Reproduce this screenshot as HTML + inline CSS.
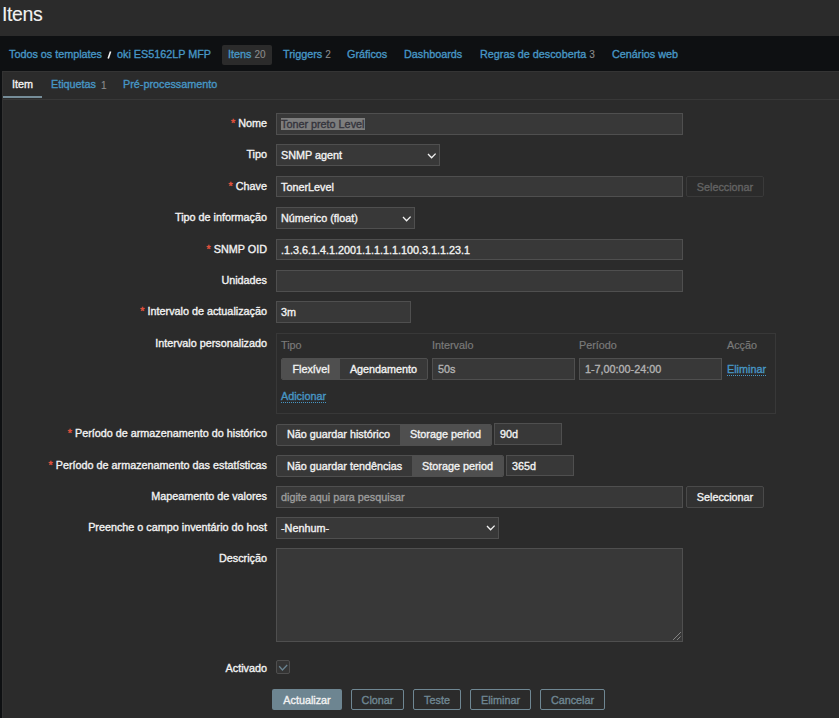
<!DOCTYPE html>
<html><head><meta charset="utf-8">
<style>
*{box-sizing:border-box;margin:0;padding:0}
html,body{width:839px;height:718px;overflow:hidden;background:#0e1012;font-family:"Liberation Sans",sans-serif;font-size:10.8px;color:#f2f2f2}
body div,body span{-webkit-text-stroke:0.35px currentColor}
.a{position:absolute}
.hdr{left:0;top:0;width:839px;height:36px;background:#2b2b2b}
.h1{left:2px;top:3px;font-size:19.5px;letter-spacing:-0.4px;line-height:22px;color:#f2f2f2;white-space:nowrap;-webkit-text-stroke:0.1px currentColor!important}
.nav{left:0;top:36px;width:839px;height:35px;background:#0e1012}
.lnk{color:#4796c4;white-space:nowrap}
.cnt{color:#8c8c8c;font-size:10px;-webkit-text-stroke:0.1px currentColor!important}
.t{white-space:nowrap;line-height:13px}
.cont{left:2px;top:71px;width:900px;height:700px;background:#2b2b2b;border-top:1px solid #343434;border-left:1px solid #323232}
.tabline{left:3px;top:99px;width:900px;height:1px;background:#383838}
.uline{left:3px;top:96px;width:39px;height:2px;background:#768d99}
.lbl{right:572px;height:22px;line-height:20px;white-space:nowrap;text-align:right;color:#f2f2f2}
.req{color:#e5533e;margin-right:3px}
.inp{height:22px;background:#383838;border:1px solid #4f4f4f;line-height:20px;padding-left:4px;white-space:nowrap;overflow:hidden;color:#f2f2f2}
.sel svg{position:absolute;right:2px;top:7px}
.btnd{height:22px;border:1px solid #3a3a3a;border-radius:2px;color:#636363;text-align:center;line-height:20px;white-space:nowrap}
.btna{height:21px;border:1px solid #6f8793;border-radius:2px;color:#6f8793;text-align:center;line-height:20px;white-space:nowrap}
.btnp{height:21px;background:#6d8591;border-radius:2px;color:#f2f2f2;text-align:center;line-height:21px;padding-top:1px;white-space:nowrap}
.btn2{height:22px;border:1px solid #4a4a4a;border-radius:2px;color:#f2f2f2;background:#323232;text-align:center;line-height:20px;white-space:nowrap}
.rad{height:22px;border:1px solid #4f4f4f;border-radius:2px;background:#383838;white-space:nowrap;overflow:hidden;display:flex}
.rad span{display:block;height:20px;line-height:20px;text-align:center;color:#f2f2f2}
.rad .on{background:#4f4f4f}
.r1 span{line-height:18px}
.gray{color:#7a7a7a;-webkit-text-stroke:0.2px currentColor!important}
</style></head><body>
<div class="a hdr"></div>
<div class="a h1">Itens</div>
<div class="a nav"></div>
<!-- nav items -->
<div class="a t lnk" style="left:9px;top:48px">Todos os templates</div>
<svg class="a" style="left:105px;top:49px" width="8" height="12" viewBox="0 0 8 12"><path d="M3.2 9.6 L5.6 2.4" stroke="#f2f2f2" stroke-width="1.6" fill="none"/></svg>
<div class="a t lnk" style="left:117px;top:48px">oki ES5162LP MFP</div>
<div class="a" style="left:222px;top:45px;width:50px;height:20px;background:#2b2b2b;border-radius:2px"></div>
<div class="a t lnk" style="left:228px;top:48px">Itens <span class="cnt">20</span></div>
<div class="a t lnk" style="left:283px;top:48px">Triggers <span class="cnt">2</span></div>
<div class="a t lnk" style="left:347px;top:48px">Gráficos</div>
<div class="a t lnk" style="left:404px;top:48px">Dashboards</div>
<div class="a t lnk" style="left:480px;top:48px">Regras de descoberta <span class="cnt">3</span></div>
<div class="a t lnk" style="left:612px;top:48px">Cenários web</div>

<div class="a cont"></div>
<div class="a tabline"></div>
<div class="a uline"></div>
<div class="a t" style="left:12px;top:78px;color:#f2f2f2">Item</div>
<div class="a t lnk" style="left:51px;top:78px">Etiquetas <span class="cnt" style="position:relative;left:2px;top:1px">1</span></div>
<div class="a t lnk" style="left:123px;top:78px">Pré-processamento</div>

<!-- form -->
<div class="a lbl" style="top:113px"><span class="req">*</span>Nome</div>
<div class="a inp" style="left:276px;top:113px;width:407px"><span style="background:#7d7d7d;color:#34343c;padding-right:1px">Toner preto Level</span></div>

<div class="a lbl" style="top:144px">Tipo</div>
<div class="a inp sel" style="left:276px;top:144px;width:164px">SNMP agent<svg width="12" height="8" viewBox="0 0 12 8"><path d="M3 2 L6.6 5.8 L10.6 1.6" fill="none" stroke="#f2f2f2" stroke-width="1.3"/></svg></div>

<div class="a lbl" style="top:176px"><span class="req">*</span>Chave</div>
<div class="a inp" style="left:276px;top:176px;width:407px;height:21px">TonerLevel</div>
<div class="a btnd" style="left:686px;top:176px;width:78px;height:21px">Seleccionar</div>

<div class="a lbl" style="top:207px">Tipo de informação</div>
<div class="a inp sel" style="left:276px;top:207px;width:139px">Númerico (float)<svg width="12" height="8" viewBox="0 0 12 8"><path d="M3 2 L6.6 5.8 L10.6 1.6" fill="none" stroke="#f2f2f2" stroke-width="1.3"/></svg></div>

<div class="a lbl" style="top:239px"><span class="req">*</span>SNMP OID</div>
<div class="a inp" style="left:276px;top:239px;width:407px;height:21px">.1.3.6.1.4.1.2001.1.1.1.1.100.3.1.1.23.1</div>

<div class="a lbl" style="top:270px">Unidades</div>
<div class="a inp" style="left:276px;top:270px;width:407px"></div>

<div class="a lbl" style="top:301px"><span class="req">*</span>Intervalo de actualização</div>
<div class="a inp" style="left:276px;top:301px;width:135px">3m</div>

<div class="a lbl" style="top:333px">Intervalo personalizado</div>
<div class="a" style="left:276px;top:333px;width:500px;height:81px;border:1px solid #383838"></div>
<div class="a t gray" style="left:281px;top:339px">Tipo</div>
<div class="a t gray" style="left:432px;top:339px">Intervalo</div>
<div class="a t gray" style="left:579px;top:339px">Período</div>
<div class="a t gray" style="left:727px;top:339px">Acção</div>
<div class="a rad" style="left:281px;top:358px;width:147px"><span class="on" style="width:58px">Flexível</span><span style="width:87px">Agendamento</span></div>
<div class="a inp" style="left:432px;top:358px;width:143px;color:#b2b2b2;padding-left:5px">50s</div>
<div class="a inp" style="left:579px;top:358px;width:143px;color:#b2b2b2;padding-left:5px">1-7,00:00-24:00</div>
<div class="a t lnk" style="left:727px;top:363px;line-height:12px;border-bottom:1px dotted #4796c4">Eliminar</div>
<div class="a t lnk" style="left:281px;top:390px;line-height:12px;border-bottom:1px dotted #4796c4">Adicionar</div>

<div class="a lbl" style="top:423px"><span class="req">*</span>Período de armazenamento do histórico</div>
<div class="a rad r1" style="left:276px;top:424px;width:216px"><span style="width:123px">Não guardar histórico</span><span class="on" style="width:91px">Storage period</span></div>
<div class="a inp" style="left:494px;top:423px;width:68px;padding-left:5px">90d</div>

<div class="a lbl" style="top:455px"><span class="req">*</span>Período de armazenamento das estatísticas</div>
<div class="a rad" style="left:276px;top:455px;width:228px"><span style="width:135px">Não guardar tendências</span><span class="on" style="width:91px">Storage period</span></div>
<div class="a inp" style="left:506px;top:455px;width:68px;height:21px;padding-left:5px">365d</div>

<div class="a lbl" style="top:486px">Mapeamento de valores</div>
<div class="a inp" style="left:276px;top:486px;width:407px;color:#9c9c9c">digite aqui para pesquisar</div>
<div class="a btn2" style="left:686px;top:486px;width:78px">Seleccionar</div>

<div class="a lbl" style="top:517px">Preenche o campo inventário do host</div>
<div class="a inp sel" style="left:276px;top:517px;width:223px">-Nenhum-<svg style="top:6px" width="12" height="8" viewBox="0 0 12 8"><path d="M3 2 L6.6 5.8 L10.6 1.6" fill="none" stroke="#f2f2f2" stroke-width="1.3"/></svg></div>

<div class="a lbl" style="top:548px">Descrição</div>
<div class="a inp" style="left:276px;top:548px;width:407px;height:94px"></div><svg class="a" style="left:670px;top:630px" width="12" height="12" viewBox="0 0 12 12"><path d="M3.5 9.5 L10.5 2.5 M7.5 9.5 L10.5 6.5" fill="none" stroke="#c4c4c4" stroke-width="1" stroke-dasharray="1 0.5"/></svg>

<div class="a lbl" style="top:658px">Activado</div>
<div class="a" style="left:276px;top:660px;width:14px;height:14px;border:1px solid #4f4f4f;border-radius:2px;background:#343434"></div><svg class="a" style="left:276px;top:660px" width="14" height="14" viewBox="0 0 14 14"><path d="M3.2 6.3 L6.4 10 L11.2 5" fill="none" stroke="#6a8390" stroke-width="1.3"/></svg>

<div class="a btnp" style="left:272px;top:689px;width:70px">Actualizar</div>
<div class="a btna" style="left:351px;top:689px;width:53px">Clonar</div>
<div class="a btna" style="left:413px;top:689px;width:48px">Teste</div>
<div class="a btna" style="left:470px;top:689px;width:61px">Eliminar</div>
<div class="a btna" style="left:540px;top:689px;width:65px">Cancelar</div>
</body></html>
